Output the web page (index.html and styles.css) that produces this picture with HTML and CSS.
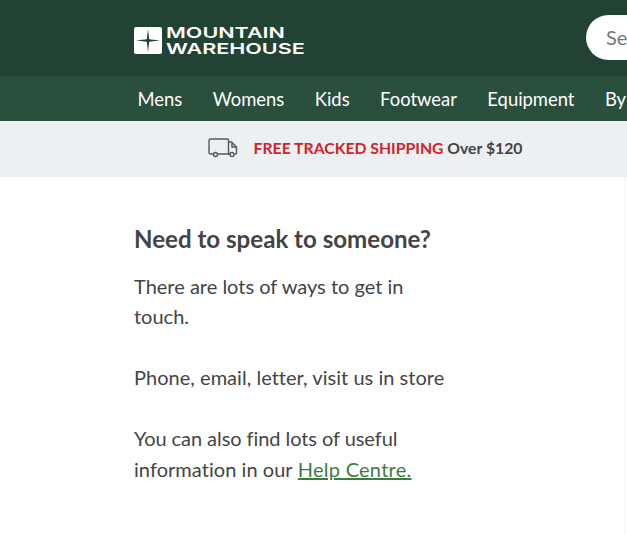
FILE: index.html
```html
<!DOCTYPE html>
<html lang="en">
<head>
<meta charset="utf-8">
<title>Mountain Warehouse</title>
<link rel="stylesheet" href="styles.css">
</head>
<body>
<header class="top">
  <div class="brand">
    <svg class="mark" width="28" height="27" viewBox="0 0 28 27"><rect width="28" height="27" rx="2" fill="#fff"/><path d="M14 2 L15.2 12.3 L26 13.5 L15.2 14.7 L14 25 L12.8 14.7 L2 13.5 L12.8 12.3 Z" fill="#22432f"/></svg>
    <div class="word"><span>MOUNTAIN</span><span>WAREHOUSE</span></div>
  </div>
  <div class="search">Search</div>
</header>
<nav class="nav">
  <a>Mens</a><a>Womens</a><a>Kids</a><a>Footwear</a><a>Equipment</a><a>By Activity</a>
</nav>
<div class="ship">
  <svg width="30" height="20" viewBox="0 0 30 20" fill="none" stroke="#555" stroke-width="1.4"><path d="M5 16H2.5A1.5 1.5 0 0 1 1 14.5V2.5A1.5 1.5 0 0 1 2.5 1H19a1.5 1.5 0 0 1 1.5 1.5V16H10"/><path d="M20.5 4h3l5 5v6a1 1 0 0 1-1 1h-1"/><path d="M20.5 16H22"/><path d="M24 5v4h4"/><circle cx="7.5" cy="16.5" r="2"/><circle cx="24" cy="16.5" r="2"/></svg>
  <p><span class="red">FREE TRACKED SHIPPING</span> Over $120</p>
</div>
<main class="main">
  <h2>Need to speak to someone?</h2>
  <p>There are lots of ways to get in touch.</p>
  <p class="phone">Phone, email, letter, visit us in store</p>
  <p><span class="also">You can also find lots of useful</span> <span class="info">information in our</span> <a href="#">Help Centre.</a></p>
</main>
</body>
</html>
```
FILE: styles.css
```css
html, body { margin: 0; padding: 0; overflow: hidden; height: 535px; background: #fff; }
body { font-family: Lato, sans-serif; color: #444; width: 627px; }
.top { background: #224233; height: 76px; padding-left: 134px; display: flex; align-items: center; justify-content: space-between; overflow: hidden; box-sizing: border-box; }
.brand { display: flex; align-items: center; gap: 3.5px; margin-top: 5px; }
.word { display: flex; flex-direction: column; color: #fff; font-family: Inter, sans-serif; font-weight: 600; font-size: 15px; line-height: 16px; transform: scaleX(1.435); transform-origin: left center; white-space: nowrap; }
.search { width: 120px; height: 45px; flex: none; margin: -2px -79px 0 0; background: #fff; border-radius: 23px; padding-left: 20px; box-sizing: border-box; line-height: 45px; color: #777; font-size: 20px; }
.nav { background: #2a4f3d; height: 45px; padding-left: 137.5px; display: flex; gap: 30.5px; align-items: center; color: #fff; font-size: 18.4px; white-space: nowrap; overflow: hidden; }
.ship { background: #edf0f3; height: 56px; display: flex; align-items: center; justify-content: center; gap: 16px; font-size: 15.75px; font-weight: 700; padding: 0 0 3px 103px; box-sizing: border-box; }
.ship p { margin: 0; }
.red { color: #d2232a; }
.main { box-sizing: border-box; width: 626px; height: 358px; padding: 45px 172px 0 134px; border-right: 1px solid #f3f3f3; font-size: 20px; line-height: 30.5px; }
.main h2 { margin: 0 0 14.75px; font-size: 24.1px; line-height: 34px; font-weight: 700; }
.main p { margin: 0 0 30.5px; }
.main a { color: #3c7d3f; letter-spacing: .25px; }
.phone { letter-spacing: .03px; }
.also { letter-spacing: -.07px; }
.info { letter-spacing: .05px; }
```
